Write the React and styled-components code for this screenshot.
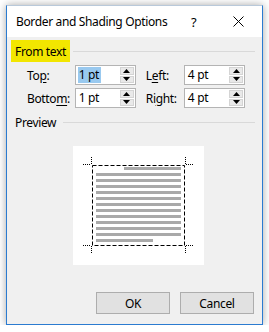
import React from "react";
import styled, { createGlobalStyle } from "styled-components";

const GlobalStyle = createGlobalStyle`
  html, body {
    margin: 0;
    padding: 0;
    background: #ffffff;
  }
  body {
    font-family: "Noto Sans", "Liberation Sans", sans-serif;
    font-size: 12px;
    letter-spacing: -0.35px;
    color: #000;
  }
`;

const Window = styled.div`
  margin: 5px 0 0 6px;
  width: 257px;
  height: 320px;
  box-sizing: border-box;
  border: 1px solid #2b7bd0;
  border-top-color: #b9c9da;
  box-shadow: 0 0 8px rgba(0, 0, 0, 0.35);
  display: flex;
  flex-direction: column;
  background: #f0f0f0;
`;

const TitleBar = styled.div`
  height: 31px;
  background: #fff;
  display: flex;
  align-items: center;
  padding-left: 9px;
  flex-shrink: 0;
`;

const Title = styled.div`
  flex: 1;
  font-size: 12px;
`;

const Help = styled.div`
  width: 20px;
  font-size: 13px;
  margin-right: 17px;
`;

const Close = styled.div`
  width: 20px;
  margin-right: 14px;
  display: flex;
  justify-content: center;
`;

const Body = styled.div`
  flex: 1;
  display: flex;
  flex-direction: column;
  padding: 3px 7px 0 4px;
`;

const GroupHeader = styled.div`
  display: flex;
  align-items: center;
  height: ${(p) => p.$h}px;
  margin-top: ${(p) => p.$top || 0}px;
`;

const GroupLabel = styled.span`
  background: ${(p) => (p.$highlight ? "#f2e600" : "transparent")};
  padding: 0 4px;
  height: 100%;
  display: flex;
  align-items: center;
`;

const Rule = styled.div`
  flex: 1;
  height: 1px;
  background: #d9d9d9;
  margin-left: 3px;
`;

const Rows = styled.div`
  display: flex;
  flex-direction: column;
  gap: 3px;
  margin-top: 3px;
  padding-left: 16px;
`;

const Row = styled.div`
  display: flex;
  align-items: center;
  height: 20px;
`;

const Label = styled.div`
  width: ${(p) => p.$w}px;
  u {
    text-decoration: underline;
    text-underline-offset: 2px;
  }
`;

const Spin = styled.div`
  width: 64px;
  height: 20px;
  box-sizing: border-box;
  border: 1px solid #b4b4b4;
  background: #fff;
  display: flex;
  align-items: center;
  padding-left: 2px;
  margin-right: 10px;
`;

const Value = styled.div`
  flex: 1;
  display: flex;
  align-items: center;
  span {
    height: 16px;
    line-height: 16px;
    padding: 0 2px 0 1px;
    background: ${(p) => (p.$selected ? "#99c9ef" : "transparent")};
  }
`;

const SpinButtons = styled.div`
  width: 14px;
  height: 16px;
  margin-right: 1px;
  display: flex;
  flex-direction: column;
  gap: 1px;
`;

const SpinHalf = styled.div`
  flex: 1;
  background: #e9e9e9;
  border: 1px solid #d4d4d4;
  display: flex;
  align-items: center;
  justify-content: center;
`;

const PreviewWrap = styled.div`
  display: flex;
  margin-top: 16px;
  padding-left: 62px;
`;

const Buttons = styled.div`
  display: flex;
  justify-content: flex-end;
  gap: 10px;
  margin-top: 27px;
  padding-right: 1px;
`;

const Button = styled.button`
  width: 74px;
  height: 22px;
  box-sizing: border-box;
  background: #e1e1e1;
  border: 1px solid #adadad;
  font-family: inherit;
  font-size: 12px;
  letter-spacing: inherit;
  color: #000;
  padding: 0;
`;

const Tri = ({ up }) => (
  <svg width="7" height="4" viewBox="0 0 7 4">
    <path d={up ? "M0 4 L3.5 0 L7 4 Z" : "M0 0 L3.5 4 L7 0 Z"} fill="#000" />
  </svg>
);

function SpinBox({ value, selected }) {
  return (
    <Spin>
      <Value $selected={selected}>
        <span>{value}</span>
      </Value>
      <SpinButtons>
        <SpinHalf>
          <Tri up />
        </SpinHalf>
        <SpinHalf>
          <Tri />
        </SpinHalf>
      </SpinButtons>
    </Spin>
  );
}

function Preview() {
  const lines = Array.from({ length: 13 }, (_, i) => i);
  return (
    <svg width="131" height="119" viewBox="0 0 131 119" style={{ display: "block" }}>
      <rect x="0" y="0" width="131" height="119" fill="#fff" />
      {lines.map((i) => {
        const x1 = i === 0 ? 51 : 23;
        const x2 = i === 12 ? 80 : 108;
        return <rect key={i} x={x1} y={21 + i * 6} width={x2 - x1} height="3" fill="#a9a9a9" />;
      })}
      <rect x="19.5" y="19.5" width="92" height="80" fill="none" stroke="#000" strokeDasharray="4 2" />
      <g stroke="#000" strokeDasharray="1 1" fill="none">
        <path d="M18.5 11 V19 M10 18.5 H18" />
        <path d="M112.5 11 V19 M113 18.5 H121" />
        <path d="M18.5 100 V108 M10 99.5 H18" />
        <path d="M112.5 100 V108 M113 99.5 H121" />
      </g>
    </svg>
  );
}

export default function App() {
  return (
    <>
      <GlobalStyle />
      <Window>
        <TitleBar>
          <Title>Border and Shading Options</Title>
          <Help>?</Help>
          <Close>
            <svg width="11" height="11" viewBox="0 0 11 11">
              <path d="M0.5 0.5 L10.5 10.5 M10.5 0.5 L0.5 10.5" stroke="#000" strokeWidth="1" />
            </svg>
          </Close>
        </TitleBar>
        <Body>
          <GroupHeader $h={22}>
            <GroupLabel $highlight>From text</GroupLabel>
            <Rule />
          </GroupHeader>
          <Rows>
            <Row>
              <Label $w={50}>
                To<u>p</u>:
              </Label>
              <SpinBox value="1 pt" selected />
              <Label $w={40}>
                L<u>e</u>ft:
              </Label>
              <SpinBox value="4 pt" />
            </Row>
            <Row>
              <Label $w={50}>
                Botto<u>m</u>:
              </Label>
              <SpinBox value="1 pt" />
              <Label $w={40}>
                Ri<u>g</u>ht:
              </Label>
              <SpinBox value="4 pt" />
            </Row>
          </Rows>
          <GroupHeader $h={16} $top={6}>
            <GroupLabel>Preview</GroupLabel>
            <Rule />
          </GroupHeader>
          <PreviewWrap>
            <Preview />
          </PreviewWrap>
          <Buttons>
            <Button>OK</Button>
            <Button>Cancel</Button>
          </Buttons>
        </Body>
      </Window>
    </>
  );
}
